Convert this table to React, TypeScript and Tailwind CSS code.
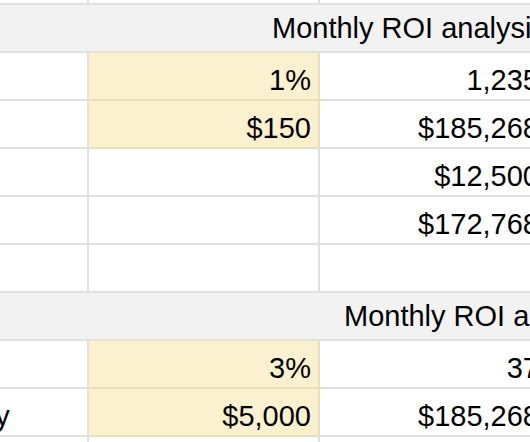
type Row =
  | { kind: 'strip' }
  | { kind: 'header'; text: string; offset: string }
  | { kind: 'data'; label?: string; input?: string; value?: string; yellow?: boolean }

const rows: Row[] = [
  { kind: 'strip' },
  { kind: 'header', text: 'Monthly ROI analysis', offset: 'pl-[505px]' },
  { kind: 'data', input: '1%', value: '1,235', yellow: true },
  { kind: 'data', input: '$150', value: '$185,268', yellow: true },
  { kind: 'data', value: '$12,500' },
  { kind: 'data', value: '$172,768' },
  { kind: 'data' },
  { kind: 'header', text: 'Monthly ROI analysis', offset: 'pl-[577px]' },
  { kind: 'data', input: '3%', value: '37', yellow: true },
  { kind: 'data', label: 'Price per company', input: '$5,000', value: '$185,268', yellow: true },
  { kind: 'data' },
]

const cell = 'h-[48px] border-b-2 border-r-2 flex items-end pb-[5px] leading-[28px] whitespace-nowrap overflow-hidden'

export default function App() {
  return (
    <div
      className="w-[530px] h-[442px] overflow-hidden bg-white text-[29px] text-black"
      style={{ fontFamily: '"Liberation Sans", Arial, sans-serif' }}
    >
      {/* sheet is scrolled right: most of the label column is off screen */}
      <div className="ml-[-233px] grid grid-cols-[322px_231px_225px] w-[778px]">
        {rows.map((r, i) => {
          if (r.kind === 'strip') {
            return (
              <div key={i} className="contents">
                <div className="h-[5px] border-b-2 border-r-2 border-[#e1e1e1]" />
                <div className="h-[5px] border-b-2 border-r-2 border-[#e1e1e1]" />
                <div className="h-[5px] border-b-2 border-r-2 border-[#e1e1e1]" />
              </div>
            )
          }
          if (r.kind === 'header') {
            return (
              <div
                key={i}
                className={`col-span-3 h-[48px] border-b-2 border-[#e1e1e1] bg-[#f2f2f2] flex items-center leading-[28px] whitespace-nowrap overflow-hidden ${r.offset}`}
              >
                {r.text}
              </div>
            )
          }
          const last = i === rows.length - 1
          return (
            <div key={i} className="contents">
              <div className={`${cell} border-[#e1e1e1] pl-[1px] ${last ? 'h-[20px]' : ''}`}>
                {r.label}
              </div>
              <div
                className={`${cell} justify-end pr-[7px] ${last ? 'h-[20px]' : ''} ${
                  r.yellow ? 'bg-[#fcf1cf] border-[#ebdfb8]' : 'border-[#e1e1e1]'
                }`}
              >
                {r.input}
              </div>
              <div className={`${cell} border-[#e1e1e1] justify-end pr-[4px] ${last ? 'h-[20px]' : ''}`}>
                {r.value}
              </div>
            </div>
          )
        })}
      </div>
    </div>
  )
}
